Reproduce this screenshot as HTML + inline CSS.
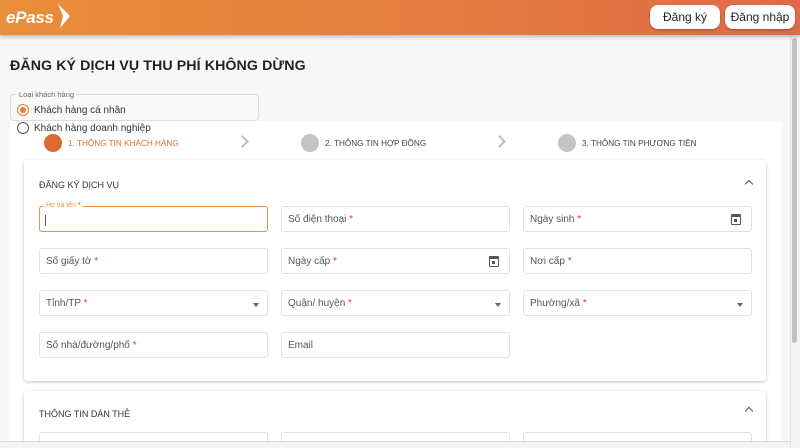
<!DOCTYPE html>
<html style="width:800px;height:448px;overflow:hidden"><head><meta charset="utf-8"><style>
*{box-sizing:border-box;margin:0;padding:0}
body{width:800px;height:448px;overflow:hidden;background:#f7f7f7;font-family:"Liberation Sans",sans-serif;position:relative;color:#333}
.hdr{position:absolute;left:0;top:0;width:800px;height:35px;background:linear-gradient(90deg,#e98e3a,#e47a40 60%,#e06a48);box-shadow:0 2px 4px rgba(0,0,0,.25);z-index:5}
.logo{position:absolute;left:6px;top:8px;color:#fff;font-weight:bold;font-style:italic;font-size:17px;letter-spacing:-.3px}
.btn{position:absolute;top:5px;height:24px;background:#fff;border-radius:8px;font-size:12px;color:#222;line-height:24px;text-align:center;box-shadow:0 1px 2px rgba(0,0,0,.3)}
h1{position:absolute;left:10px;top:58px;font-size:14.2px;font-weight:bold;color:#222;letter-spacing:.1px}
.legend{position:absolute;left:10px;top:94px;width:249px;height:27px;border:1px solid #ddd;border-radius:4px;background:#f9f9f9}
.legend span{position:absolute;left:6px;top:-5px;font-size:7.5px;color:#666;background:#f9f9f9;padding:0 2px}
.radio{position:absolute;font-size:10px;color:#333}
.radio i{position:absolute;left:-17px;top:-1px;width:12px;height:12px;border:1.3px solid #555;border-radius:50%}
.panel{position:absolute;left:10px;top:121px;width:771px;height:330px;background:#fff}
.step{position:absolute;top:139px;font-size:8.2px;color:#444}
.step i{position:absolute;left:-24px;top:-5px;width:18px;height:18px;border-radius:50%;background:#c4c4c4}
.card{position:absolute;left:24px;width:742px;background:#fff;border-radius:3px;box-shadow:0 1px 3px rgba(0,0,0,.25)}
.ct{position:absolute;left:15px;font-size:9px;color:#333}
.f{position:absolute;width:229px;height:26px;border:1px solid #e2e2e2;border-radius:3px;font-size:10px;color:#555;padding:7px 0 0 6px}
.f b{color:#e33;font-weight:normal}
.dd:after{content:"";position:absolute;right:8px;top:12px;border:3.5px solid transparent;border-top:4px solid #666}
.cal{position:absolute;right:10px;top:7px;width:10px;height:11px;border:1.5px solid #555;border-top-width:3px;border-radius:1px}
.cal:after{content:"";position:absolute;left:1.5px;top:2px;width:3px;height:3px;background:#555}
.chev{position:absolute;width:6px;height:6px;border-left:1.5px solid #555;border-top:1.5px solid #555;transform:rotate(45deg)}
.arr{position:absolute;top:137px;width:9px;height:9px;border-right:2.5px solid #bbb;border-top:2.5px solid #bbb;transform:rotate(45deg)}
</style></head><body>
<div class="hdr"><div class="logo">ePass<svg width="12" height="24" viewBox="0 0 12 24" style="position:absolute;left:52px;top:-4px"><path d="M0 0 L12 12 L2 24 L5 12 Z" fill="#fff"/></svg></div>
<div class="btn" style="left:650px;width:70px">Đăng ký</div>
<div class="btn" style="left:725px;width:70px">Đăng nhập</div></div>
<h1>ĐĂNG KÝ DỊCH VỤ THU PHÍ KHÔNG DỪNG</h1>
<div class="legend"><span>Loại khách hàng</span></div>
<div class="panel"></div>
<div class="radio" style="left:34px;top:105px"><i style="border-color:#e68035"><em style="position:absolute;left:2px;top:2px;width:6px;height:6px;border-radius:50%;background:#e68035"></em></i>Khách hàng cá nhân</div>
<div class="radio" style="left:34px;top:123px"><i></i>Khách hàng doanh nghiệp</div>
<div class="step" style="left:68px;color:#e06a30"><i style="background:#dd6a30"></i>1. THÔNG TIN KHÁCH HÀNG</div>
<div class="arr" style="left:238px"></div>
<div class="step" style="left:325px"><i></i>2. THÔNG TIN HỢP ĐỒNG</div>
<div class="arr" style="left:495px"></div>
<div class="step" style="left:582px"><i></i>3. THÔNG TIN PHƯƠNG TIỆN</div>
<div class="card" style="top:160px;height:221px">
<div class="ct" style="top:20px">ĐĂNG KÝ DỊCH VỤ</div><div class="chev" style="left:722px;top:21px"></div></div>
<div class="card" style="top:391px;height:57px">
<div class="ct" style="top:18px">THÔNG TIN DÁN THẺ</div><div class="chev" style="left:722px;top:17px"></div></div>
<div class="f" style="left:39px;top:206px;border:1.3px solid #e8914a"><span style="position:absolute;left:4px;top:-5px;font-size:7px;color:#e8914a;background:#fff;padding:0 2px">Họ và tên <b>*</b></span><span style="position:absolute;left:5px;top:8px;width:1px;height:11px;background:#557"></span></div>
<div class="f" style="left:281px;top:206px">Số điện thoại <b>*</b></div>
<div class="f" style="left:523px;top:206px">Ngày sinh <b>*</b><span class="cal"></span></div>
<div class="f" style="left:39px;top:248px">Số giấy tờ <b>*</b></div>
<div class="f" style="left:281px;top:248px">Ngày cấp <b>*</b><span class="cal"></span></div>
<div class="f" style="left:523px;top:248px">Nơi cấp <b>*</b></div>
<div class="f dd" style="left:39px;top:290px">Tỉnh/TP <b>*</b></div>
<div class="f dd" style="left:281px;top:290px">Quận/ huyện <b>*</b></div>
<div class="f dd" style="left:523px;top:290px">Phường/xã <b>*</b></div>
<div class="f" style="left:39px;top:332px">Số nhà/đường/phố <b>*</b></div>
<div class="f" style="left:281px;top:332px">Email</div>
<div class="f" style="left:39px;top:432px;height:16px"></div><div class="f" style="left:281px;top:432px;height:16px"></div><div class="f" style="left:523px;top:432px;height:16px"></div>
<div style="position:absolute;left:0;top:441px;width:790px;height:7px;background:#f4f4f4;border-top:1px solid #ddd"></div>
<div style="position:absolute;left:790px;top:35px;width:10px;height:413px;background:#f4f4f4;border-left:1px solid #e4e4e4"></div>
<div style="position:absolute;left:792px;top:38px;width:5px;height:305px;background:#c1c1c1;border-radius:3px"></div>
</body></html>
